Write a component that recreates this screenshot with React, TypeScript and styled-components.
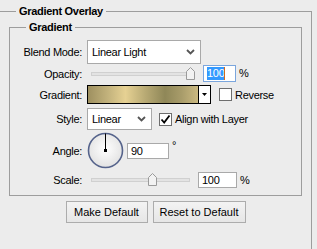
import React from "react";
import styled, { createGlobalStyle } from "styled-components";

const GlobalStyle = createGlobalStyle`
  html, body {
    margin: 0;
    padding: 0;
    background: #ececec;
  }
  body {
    font-family: "Liberation Sans", Arial, sans-serif;
    font-size: 11px;
    letter-spacing: -0.3px;
    color: #000;
  }
`;

const Page = styled.div`
  width: 317px;
  height: 249px;
  overflow: hidden;
  box-sizing: border-box;
  padding-top: 5px;
  background: #ececec;
`;

const Group = styled.fieldset<{ $outer?: boolean }>`
  margin: ${(p) => (p.$outer ? "0 5px 0 -4px" : "0")};
  padding: ${(p) => (p.$outer ? "3px 9px 40px 12px" : "0 0 7px 0")};
  border: 1px solid #9d9d9d;
  min-width: 0;
`;

const Title = styled.legend<{ $indent: number }>`
  margin-left: ${(p) => p.$indent}px;
  padding: 0 3px;
  height: 13px;
  line-height: 13px;
  font-weight: bold;
`;

const Row = styled.div<{ $h: number; $mt: number }>`
  display: flex;
  align-items: center;
  height: ${(p) => p.$h}px;
  margin-top: ${(p) => p.$mt}px;
`;

const Label = styled.span`
  flex-shrink: 0;
  width: 72px;
  margin-right: 5px;
  text-align: right;
  white-space: nowrap;
`;

const Select = styled.div<{ $w: number }>`
  box-sizing: border-box;
  display: flex;
  align-items: center;
  justify-content: space-between;
  width: ${(p) => p.$w}px;
  height: 100%;
  padding: 0 5px 0 4px;
  background: #fff;
  border: 1px solid #a9a9a9;
  white-space: nowrap;
`;

const Slider = styled.div<{ $w: number }>`
  position: relative;
  flex-shrink: 0;
  width: ${(p) => p.$w}px;
  height: 100%;
  display: flex;
  align-items: center;
`;

const Track = styled.div<{ $w: number }>`
  box-sizing: border-box;
  margin-left: 4px;
  width: ${(p) => p.$w}px;
  height: 4px;
  background: #e3e3e3;
  border: 1px solid #d0d0d0;
`;

const Thumb = styled.svg`
  position: absolute;
  top: 50%;
  margin-top: -7px;
`;

const Field = styled.div<{ $w: number; $focus?: boolean }>`
  box-sizing: border-box;
  display: flex;
  align-items: center;
  flex-shrink: 0;
  width: ${(p) => p.$w}px;
  height: 100%;
  padding-left: 3px;
  background: #fff;
  border: 1px solid ${(p) => (p.$focus ? "#7ba6dd" : "#a9a9a9")};
`;

const Selected = styled.span`
  background: #3399ff;
  color: #fff;
  line-height: 13px;
`;

const Caret = styled.span`
  width: 1px;
  height: 13px;
  background: #d2691e;
`;

const Unit = styled.span<{ $raise?: boolean }>`
  margin-left: 3px;
  align-self: ${(p) => (p.$raise ? "flex-start" : "center")};
  margin-top: ${(p) => (p.$raise ? "8px" : "0")};
  line-height: 1;
`;

const GradientBox = styled.div`
  box-sizing: border-box;
  display: flex;
  width: 124px;
  height: 100%;
  border: 1px solid #000;
  background: #fff;
`;

const GradientFill = styled.div`
  flex: 1;
  background: linear-gradient(
    to right,
    #9e9060 0%,
    #c2b27c 18%,
    #e6d193 34%,
    #b8aa74 52%,
    #8f8758 70%,
    #a89c6a 85%,
    #cbb981 100%
  );
`;

const GradientArrow = styled.div`
  display: flex;
  align-items: center;
  justify-content: center;
  width: 11px;
  border-left: 1px solid #000;
  background: #fff;
`;

const Check = styled.div<{ $ml: number }>`
  box-sizing: border-box;
  display: flex;
  align-items: center;
  justify-content: center;
  flex-shrink: 0;
  width: 13px;
  height: 13px;
  margin-left: ${(p) => p.$ml}px;
  background: #fff;
  border: 1px solid #6e6e6e;
`;

const CheckText = styled.span`
  margin-left: 3px;
  white-space: nowrap;
`;

const Dial = styled.svg`
  flex-shrink: 0;
  margin-right: 3px;
`;

const Buttons = styled.div`
  display: flex;
  justify-content: center;
  gap: 5px;
  margin-top: 5px;
`;

const Button = styled.button<{ $w: number }>`
  box-sizing: border-box;
  width: ${(p) => p.$w}px;
  height: 22px;
  padding: 0;
  font: inherit;
  color: #000;
  background: linear-gradient(#f3f3f3, #e6e6e6);
  border: 1px solid #acacac;
  border-radius: 0;
`;

const Chevron = () => (
  <svg width="9" height="6" viewBox="0 0 9 6">
    <path d="M1 1 L4.5 4.5 L8 1" fill="none" stroke="#555" strokeWidth="1.8" />
  </svg>
);

const CheckMark = () => (
  <svg width="11" height="11" viewBox="0 0 11 11">
    <path d="M1.5 5.5 L4.2 8.5 L9.5 1.5" fill="none" stroke="#000" strokeWidth="1.8" />
  </svg>
);

function RangeSlider({ width, track, pos }: { width: number; track: number; pos: number }) {
  const left = 4 + pos * (track - 6) - 2;
  return (
    <Slider $w={width}>
      <Track $w={track} />
      <Thumb width="9" height="13" viewBox="0 0 9 13" style={{ left }}>
        <path d="M0.5 12.5 V4.5 L4.5 0.5 L8.5 4.5 V12.5 Z" fill="#f2f2f2" stroke="#9a9a9a" />
      </Thumb>
    </Slider>
  );
}

export default function App() {
  return (
    <Page>
      <GlobalStyle />
      <Group $outer>
        <Title $indent={7}>Gradient Overlay</Title>
        <Group>
          <Title $indent={16}>Gradient</Title>

          <Row $h={24} $mt={6}>
            <Label>Blend Mode:</Label>
            <Select $w={114}>
              Linear Light
              <Chevron />
            </Select>
          </Row>

          <Row $h={17} $mt={1}>
            <Label>Opacity:</Label>
            <RangeSlider width={116} track={103} pos={1} />
            <Field $w={33} $focus>
              <Selected>100</Selected>
              <Caret />
            </Field>
            <Unit>%</Unit>
          </Row>

          <Row $h={19} $mt={3}>
            <Label>Gradient:</Label>
            <GradientBox>
              <GradientFill />
              <GradientArrow>
                <svg width="5" height="3" viewBox="0 0 5 3">
                  <path d="M0 0 H5 L2.5 3 Z" fill="#000" />
                </svg>
              </GradientArrow>
            </GradientBox>
            <Check $ml={8} />
            <CheckText>Reverse</CheckText>
          </Row>

          <Row $h={22} $mt={4}>
            <Label>Style:</Label>
            <Select $w={65}>
              Linear
              <Chevron />
            </Select>
            <Check $ml={7}>
              <CheckMark />
            </Check>
            <CheckText>Align with Layer</CheckText>
          </Row>

          <Row $h={37} $mt={2}>
            <Label>Angle:</Label>
            <Dial width="37" height="37" viewBox="0 0 37 37">
              <defs>
                <radialGradient id="dialFill" cx="50%" cy="45%" r="55%">
                  <stop offset="0%" stopColor="#ffffff" />
                  <stop offset="100%" stopColor="#e2e2e2" />
                </radialGradient>
              </defs>
              <circle cx="18.5" cy="18.5" r="17" fill="url(#dialFill)" stroke="#55638b" strokeWidth="1.6" />
              <line x1="18.5" y1="1.5" x2="18.5" y2="18.5" stroke="#000" strokeWidth="1" />
              <rect x="17" y="17" width="3" height="3" fill="#000" />
            </Dial>
            <Field $w={42} style={{ height: 16 }}>
              90
            </Field>
            <Unit $raise>°</Unit>
          </Row>

          <Row $h={16} $mt={3}>
            <Label>Scale:</Label>
            <RangeSlider width={111} track={99} pos={0.63} />
            <Field $w={39}>100</Field>
            <Unit>%</Unit>
          </Row>
        </Group>

        <Buttons>
          <Button $w={82}>Make Default</Button>
          <Button $w={93}>Reset to Default</Button>
        </Buttons>
      </Group>
    </Page>
  );
}
